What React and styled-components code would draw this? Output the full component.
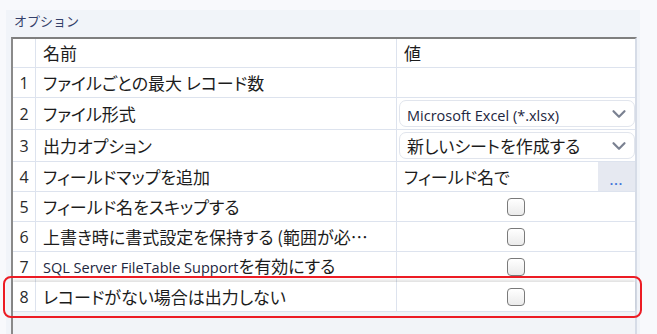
import React from 'react';
import styled, { createGlobalStyle } from 'styled-components';
import { ChevronDown } from 'lucide-react';

const Global = createGlobalStyle`
  html, body { margin: 0; padding: 0; background: #f8f9fc; }
  body {
    font-family: "Noto Sans CJK JP", sans-serif;
    width: 657px;
    height: 334px;
    overflow: hidden;
  }
`;

const Page = styled.div`
  width: 657px;
  height: 334px;
  box-sizing: border-box;
  padding: 10px 0 0 6px;
  display: flex;
  align-items: flex-start;
`;

const Panel = styled.section`
  width: 634px;
  height: 324px;
  box-sizing: border-box;
  padding-left: 5px;
  background: #f1f4f9;
  display: flex;
  flex-direction: column;
`;

const GroupLabel = styled.div`
  height: 27px;
  box-sizing: border-box;
  padding: 2px 0 0 3px;
  font-size: 13px;
  line-height: 18px;
  color: #34406a;
`;

const Frame = styled.div`
  position: relative;
  width: 626px;
  flex: 1;
  box-sizing: border-box;
  border-top: 2px solid #7f7f7f;
  border-left: 2px solid #8a8a8a;
  border-right: 2px solid #d6dce7;
  background: #f2f4f8;
`;

const Row = styled.div`
  display: grid;
  grid-template-columns: 23px 361px 238px;
  height: ${(p) => p.$h}px;
  position: relative;
  ${(p) => (p.$raised ? 'box-shadow: 0 -2px 3px rgba(0,0,0,0.13); z-index: 1;' : '')}
`;

const Cell = styled.div`
  box-sizing: border-box;
  background: #ffffff;
  border-bottom: 1px solid #dde3ee;
  border-right: ${(p) => (p.$last ? 'none' : '1px solid #dde3ee')};
  display: flex;
  align-items: center;
  min-width: 0;
  color: #1c1c1c;
  font-size: 17px;
  font-feature-settings: "palt";
  padding-left: ${(p) => (p.$pad ?? 7)}px;
  justify-content: ${(p) => (p.$center ? 'center' : 'flex-start')};
`;

const NumCell = styled(Cell)`
  justify-content: center;
  padding-left: 0;
  font-family: "Open Sans", sans-serif;
  font-size: 16px;
  color: #2a2a2a;
`;

const Text = styled.span`
  display: block;
  white-space: nowrap;
  overflow: hidden;
  text-overflow: ellipsis;
  line-height: 28px;
  margin-right: 20px;
`;

const Lat = styled.span`
  font-family: "Open Sans", sans-serif;
  font-size: 14.5px;
  color: #1d2640;
`;

const Dropdown = styled.div`
  flex: 1;
  align-self: stretch;
  margin: 2px 0 2px 2px;
  box-sizing: border-box;
  border: 1px solid #e1e5ed;
  border-radius: 7px;
  background: #fff;
  display: flex;
  align-items: center;
  justify-content: space-between;
  padding: 0 4px 0 7px;
  font-size: 17px;
`;

const FieldValue = styled.div`
  flex: 1;
  align-self: stretch;
  display: flex;
  align-items: center;
  justify-content: space-between;
`;

const EllipsisButton = styled.div`
  width: 37px;
  align-self: stretch;
  background: #e6e9f1;
  display: flex;
  align-items: flex-end;
  justify-content: center;
  padding-bottom: 4px;
  box-sizing: border-box;
  color: #3d74d9;
  font-family: "Open Sans", sans-serif;
  font-size: 12px;
  font-weight: 700;
  letter-spacing: 1px;
  line-height: 12px;
`;

const CheckBox = styled.span`
  width: 18px;
  height: 18px;
  box-sizing: border-box;
  border: 1.5px solid #7a7a7a;
  border-radius: 4px;
  background: linear-gradient(#ffffff, #ebebeb);
`;

const Highlight = styled.div`
  position: absolute;
  left: -10px;
  top: 237px;
  width: 639px;
  height: 42px;
  box-sizing: border-box;
  border: 2px solid #ec1c24;
  border-radius: 8px;
  pointer-events: none;
  z-index: 2;
`;

const rows = [
  { n: 1, h: 30, name: 'ファイルごとの最大 レコード数', kind: 'empty' },
  { n: 2, h: 32, name: 'ファイル形式', kind: 'select', value: <Lat>Microsoft Excel (*.xlsx)</Lat> },
  { n: 3, h: 32, name: '出力オプション', kind: 'select', value: '新しいシートを作成する' },
  { n: 4, h: 30, name: 'フィールドマップを追加', kind: 'button', value: 'フィールド名で' },
  { n: 5, h: 30, name: 'フィールド名をスキップする', kind: 'check' },
  { n: 6, h: 30, name: '上書き時に書式設定を保持する (範囲が必要です)', kind: 'check' },
  { n: 7, h: 30, name: <><Lat>SQL Server FileTable Support</Lat>を有効にする</>, kind: 'check' },
  { n: 8, h: 30, name: 'レコードがない場合は出力しない', kind: 'check', raised: true },
];

function ValueCell({ row }) {
  if (row.kind === 'select') {
    return (
      <Cell $last $pad={0}>
        <Dropdown>
          <span>{row.value}</span>
          <ChevronDown size={22} strokeWidth={2.4} color="#7a8191" />
        </Dropdown>
      </Cell>
    );
  }
  if (row.kind === 'button') {
    return (
      <Cell $last>
        <FieldValue>
          <span>{row.value}</span>
          <EllipsisButton>...</EllipsisButton>
        </FieldValue>
      </Cell>
    );
  }
  if (row.kind === 'check') {
    return (
      <Cell $last $center $pad={0}>
        <CheckBox />
      </Cell>
    );
  }
  return <Cell $last />;
}

export default function App() {
  return (
    <>
      <Global />
      <Page>
        <Panel>
          <GroupLabel>オプション</GroupLabel>
          <Frame>
            <Row $h={29}>
              <NumCell />
              <Cell><Text>名前</Text></Cell>
              <Cell $last><Text>値</Text></Cell>
            </Row>
            {rows.map((r) => (
              <Row key={r.n} $h={r.h} $raised={r.raised}>
                <NumCell>{r.n}</NumCell>
                <Cell><Text>{r.name}</Text></Cell>
                <ValueCell row={r} />
              </Row>
            ))}
            <Highlight />
          </Frame>
        </Panel>
      </Page>
    </>
  );
}
